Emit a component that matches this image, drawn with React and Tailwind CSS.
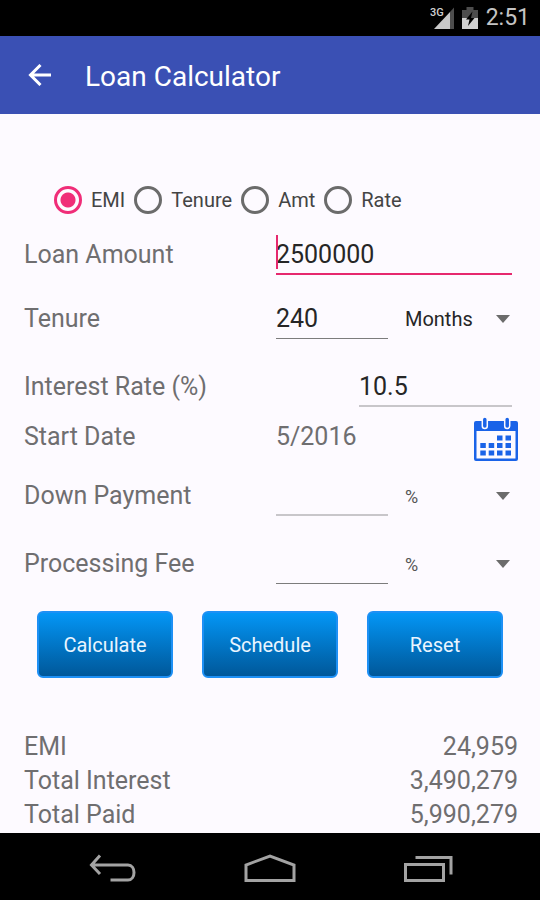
import { useState } from 'react';

// ── Helpers ──────────────────────────────────────────────────────────────────
const calculate = ({ amount, tenure, rate }) => {
  const months = Number(tenure);
  const r = Number(rate) / 1200;
  const growth = Math.pow(1 + r, months);
  const emi = (Number(amount) * r * growth) / (growth - 1) || 0;
  const paid = emi * months;
  return { emi, interest: Math.max(paid - Number(amount), 0), paid };
};

const format = (n) => Math.floor(n).toLocaleString('en-US');

const INITIAL = { amount: '2500000', tenure: '240', rate: '10.5', down: '', fee: '' };
const EMPTY = { amount: '', tenure: '', rate: '', down: '', fee: '' };
const MODES = ['EMI', 'Tenure', 'Amt', 'Rate'];

// ── Icons ────────────────────────────────────────────────────────────────────
const BackArrow = () => (
  <svg viewBox="0 0 24 22" className="w-6 h-[22px]" fill="none" stroke="currentColor" strokeWidth="3">
    <path d="M23 11H3M12.500 1L2.500 11l10 10" />
  </svg>
);

const SignalIcon = () => (
  <svg viewBox="0 0 24 22" className="w-6 h-[22px]">
    <path d="M4 22L20 5v17z" fill="#c9c9c9" />
    <path d="M20 5L24 0.500V22H20z" fill="#4d4d4d" />
    <path d="M0 0h14v8l-4 4H0z" fill="#000" />
    <text x="0" y="9" fontSize="11" fontWeight="500" fontFamily="Roboto, sans-serif" fill="#d0d0d0">3G</text>
  </svg>
);

const BatteryIcon = () => (
  <svg viewBox="0 0 16 22" className="w-4 h-[22px]">
    <path d="M4.500 0h7v3H16v8H0V3h4.500z" fill="#4d4d4d" />
    <path d="M0 11h16v11H0z" fill="#d0d0d0" />
    <path d="M10.500 4.500L4 12.500h3.500L6 19l6.500-8H9z" fill="#000" />
  </svg>
);

const CalendarIcon = () => (
  <svg viewBox="0 0 44 44" className="w-11 h-11" fill="#1a63e8">
    <path fillRule="evenodd" d="M2 4h40a2 2 0 0 1 2 2v36a2 2 0 0 1-2 2H2a2 2 0 0 1-2-2V6a2 2 0 0 1 2-2zM2.500 14v27.500h39V14z" />
    {[10.8, 33.2].map((x) => (
      <rect key={x} x={x - 2.5} y="0" width="5" height="11.500" rx="2.500" stroke="#fdfaff" strokeWidth="1.500" />
    ))}
    <path d="M23 18.500h5.500v5H23zM31.500 18.500H37v5h-5.500z" />
    <path d="M6.300 26h5.500v5H6.300zM14.700 26h5.500v5h-5.500zM23 26h5.500v5H23zM31.500 26H37v5h-5.500z" />
    <path d="M6.300 33.500h5.500v5H6.300zM14.700 33.500h5.500v5h-5.500zM23 33.500h5.500v5H23zM31.500 33.500H37v5h-5.500z" />
  </svg>
);

// ── Form parts ───────────────────────────────────────────────────────────────
const Row = ({ label, htmlFor, className = 'h-16', children }) => (
  <div className={`flex items-center ${className}`}>
    <label htmlFor={htmlFor} className="w-[51%] shrink-0">{label}</label>
    <div className="flex flex-1 min-w-0 items-center">{children}</div>
  </div>
);

const Field = ({ id, value, onChange, className }) => (
  <input
    id={id}
    type="text"
    inputMode="decimal"
    value={value}
    onChange={(e) => onChange(id, e.target.value)}
    className={`h-10 min-w-0 bg-transparent text-[#262626] outline-none ${className}`}
  />
);

const Spinner = ({ label, options, className }) => (
  <div className="relative flex-1 ml-[17px] mr-1.5">
    <select aria-label={label} className={`w-full h-10 appearance-none bg-transparent outline-none ${className}`}>
      {options.map((o) => <option key={o}>{o}</option>)}
    </select>
    <svg viewBox="0 0 14 8" className="absolute right-0.5 top-4 w-3.5 h-2 pointer-events-none" fill="#6b6b6b">
      <path d="M0 0h14L7 8z" />
    </svg>
  </div>
);

const Action = ({ children, onClick }) => (
  <button
    type="button"
    onClick={onClick}
    className="h-[67px] rounded-md border-2 border-[#1e90f5] bg-linear-to-b from-[#0496f6] to-[#00589a] text-xl text-[#eaf5ff]"
  >
    {children}
  </button>
);

// ── App ──────────────────────────────────────────────────────────────────────
const App = () => {
  const [mode, setMode] = useState('EMI');
  const [form, setForm] = useState(INITIAL);
  const [result, setResult] = useState(calculate(INITIAL));

  const update = (key, value) => setForm({ ...form, [key]: value });
  const reset = () => {
    setForm(EMPTY);
    setResult(calculate(EMPTY));
  };

  return (
    <div className="min-h-screen flex flex-col bg-[#fdfaff] font-['Roboto',sans-serif]">
      {/* Status bar */}
      <div className="h-9 px-2.5 flex items-center justify-end gap-2 bg-black text-[#c4c4c4]">
        <SignalIcon />
        <BatteryIcon />
        <span className="text-[23px]">2:51</span>
      </div>

      <header className="h-[78px] px-7 flex items-center gap-[33px] bg-[#3a50b4] text-white">
        <button type="button" aria-label="Back"><BackArrow /></button>
        <h1 className="text-[28px] pt-1">Loan Calculator</h1>
      </header>

      <main className="flex-1 pt-[62px] pl-6 pr-[22px] text-[25px] text-[#6f6e70]">
        <div role="radiogroup" aria-label="Calculate" className="h-[47px] pl-[30px] flex items-center gap-[9px]">
          {MODES.map((m) => (
            <label key={m} className="flex items-center gap-[9px] text-xl text-[#444444]">
              <input
                type="radio"
                name="mode"
                checked={mode === m}
                onChange={() => setMode(m)}
                className="w-7 h-7 appearance-none rounded-full border-3 border-[#6b6b6b] checked:border-[#f02d78] checked:bg-[radial-gradient(circle,#f02d78_7px,transparent_8px)]"
              />
              {m}
            </label>
          ))}
        </div>

        <Row label="Loan Amount" htmlFor="amount">
          <div className="relative flex flex-1 mr-1.5">
            <Field id="amount" value={form.amount} onChange={update} className="w-full border-b-2 border-[#e6286e]" />
            {/* text cursor */}
            <span className="absolute left-0 top-0 w-0.5 h-[34px] bg-[#e6286e]" />
          </div>
        </Row>

        <Row label="Tenure" htmlFor="tenure">
          <Field id="tenure" value={form.tenure} onChange={update} className="w-28 border-b border-[#7c7c7c]" />
          <Spinner label="Tenure unit" options={['Months', 'Years']} className="text-xl text-[#262626]" />
        </Row>

        <Row label="Interest Rate (%)" htmlFor="rate" className="h-16 mt-1">
          <Field id="rate" value={form.rate} onChange={update} className="w-[153px] ml-auto mr-1.5 border-b-2 border-[#c8c6ca]" />
        </Row>

        <Row label="Start Date" htmlFor="date" className="h-9">
          <span>5/2016</span>
          <button id="date" type="button" aria-label="Pick start date" className="ml-auto -my-2 pt-1">
            <CalendarIcon />
          </button>
        </Row>

        <Row label="Down Payment" htmlFor="down" className="h-16 mt-[9px]">
          <Field id="down" value={form.down} onChange={update} className="w-28 border-b-2 border-[#c8c6ca]" />
          <Spinner label="Down payment unit" options={['%', 'Amt']} className="text-lg text-[#555555]" />
        </Row>

        <Row label="Processing Fee" htmlFor="fee" className="h-16 mt-1">
          <Field id="fee" value={form.fee} onChange={update} className="w-28 border-b border-[#7c7c7c]" />
          <Spinner label="Processing fee unit" options={['%', 'Amt']} className="text-lg text-[#555555]" />
        </Row>

        <div className="mt-[15px] pl-[13px] pr-[15px] grid grid-cols-3 gap-[29px]">
          <Action onClick={() => setResult(calculate(form))}>Calculate</Action>
          <Action>Schedule</Action>
          <Action onClick={reset}>Reset</Action>
        </div>

        <dl className="mt-[52px] grid grid-cols-[1fr_auto] leading-[34px]">
          <dt>EMI</dt>
          <dd className="text-right">{format(result.emi)}</dd>
          <dt>Total Interest</dt>
          <dd className="text-right">{format(result.interest)}</dd>
          <dt>Total Paid</dt>
          <dd className="text-right">{format(result.paid)}</dd>
        </dl>
      </main>

      {/* System navigation */}
      <nav className="h-[67px] pt-1 px-[86px] flex items-center justify-between bg-black text-[#a3a3a3]">
        <button type="button" aria-label="Back">
          <svg viewBox="0 0 52 30" className="w-[52px] h-[30px]" fill="none" stroke="currentColor" strokeWidth="3">
            <path d="M14 1.500L5.500 11l8.500 9M5.500 11H42c8 0 8 15 0 15H24.500" />
          </svg>
        </button>
        <button type="button" aria-label="Home">
          <svg viewBox="0 0 52 30" className="w-[52px] h-[30px]" fill="none" stroke="currentColor" strokeWidth="3">
            <path d="M2 26.500V11L26 2l24 9v15.500z" />
          </svg>
        </button>
        <button type="button" aria-label="Recent apps">
          <svg viewBox="0 0 52 30" className="w-[52px] h-[30px]" fill="none" stroke="currentColor" strokeWidth="3">
            <path d="M3.500 10.500h38v16h-38zM13.500 3.500h35.500v17" />
          </svg>
        </button>
      </nav>
    </div>
  );
};

export default App;
